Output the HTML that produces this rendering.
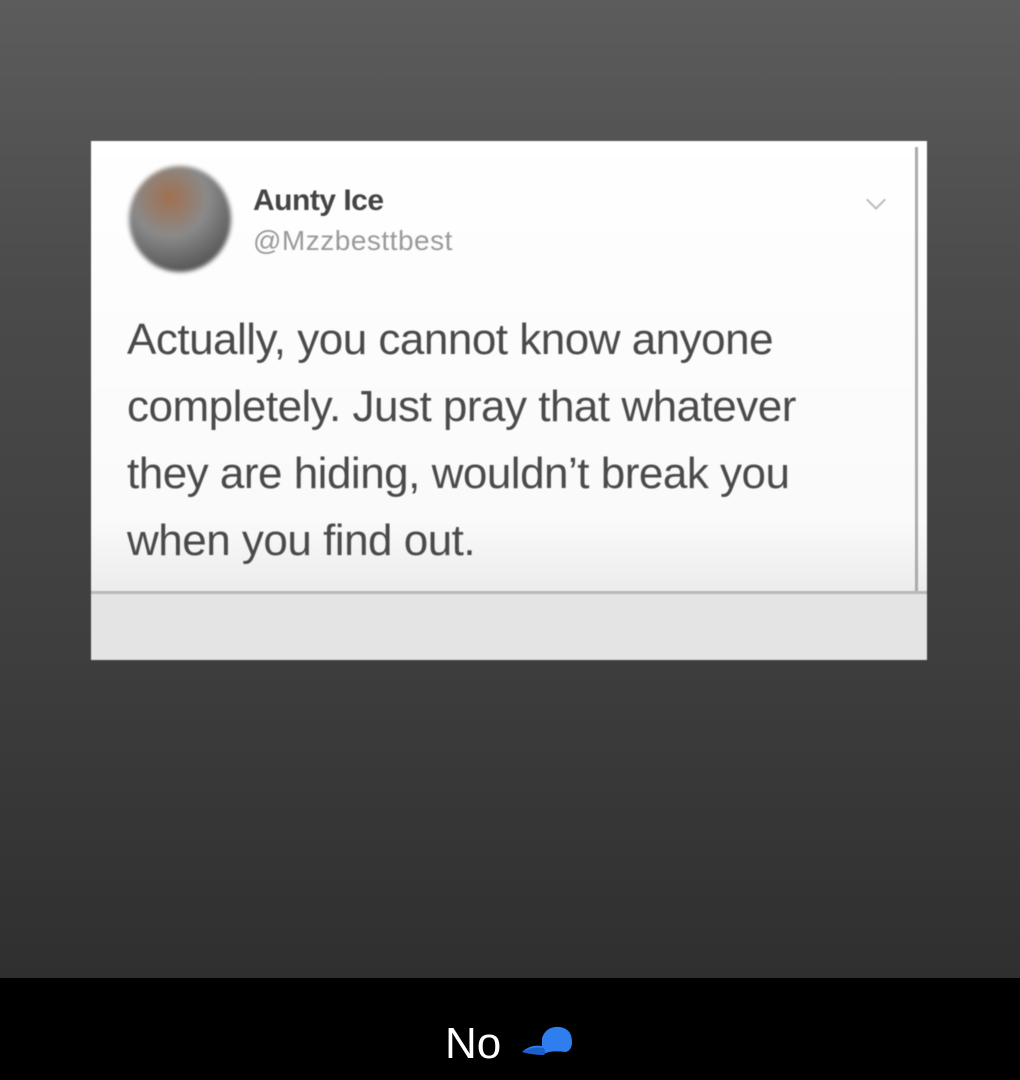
<!DOCTYPE html>
<html><head><style>
body{margin:0;width:1020px;height:1080px;overflow:hidden;background:linear-gradient(#5c5c5c 0,#4a4a4a 300px,#3e3e3e 650px,#2f2f2f 978px);font-family:"Liberation Sans",sans-serif;position:relative}
.card{position:absolute;left:91px;top:141px;width:836px;height:516px;background:linear-gradient(#fff 0,#fafafa 380px,#ececec 450px);filter:blur(0.6px)}
.foot{position:absolute;left:0;top:450px;width:836px;height:66px;background:#e4e4e4;border-top:3px solid #b8b8b8}
.vline{position:absolute;left:824px;top:6px;width:3px;height:444px;background:#aaa}
.av{position:absolute;left:38px;top:25px;width:102px;height:106px;border-radius:50%;background:radial-gradient(circle at 40% 30%,#a07050 0,#8a8a8a 40%,#5a5a5a 75%,#333 100%);filter:blur(2px)}
.name{position:absolute;left:162px;top:43px;font-size:30px;font-weight:bold;color:#444;letter-spacing:-0.5px}
.handle{position:absolute;left:162px;top:84px;font-size:28px;color:#9a9a9a;letter-spacing:0.5px}
.txt{position:absolute;left:36px;top:165px;font-size:44px;line-height:67px;color:#4a4a4a;letter-spacing:-0.5px;white-space:nowrap}
.chev{position:absolute;left:778px;top:52px;width:12px;height:12px;border-right:2px solid #bbb;border-bottom:2px solid #bbb;transform:rotate(45deg)}
.bar{position:absolute;left:0;top:978px;width:1020px;height:102px;background:#000}
.no{position:absolute;left:445px;top:1019px;font-size:44px;color:#fff}
</style></head><body>
<div class="card">
<div class="av"></div>
<div class="name">Aunty Ice</div>
<div class="handle">@Mzzbesttbest</div>
<div class="chev"></div>
<div class="txt">Actually, you cannot know anyone<br>completely. Just pray that whatever<br>they are hiding, wouldn’t break you<br>when you find out.</div>
<div class="vline"></div>
<div class="foot"></div>
</div>
<div class="bar"></div>
<div class="no">No</div>
<svg style="position:absolute;left:520px;top:1024px" width="54" height="36" viewBox="0 0 54 36">
<path d="M2 28 Q10 20 22 22 L22 14 Q26 2 40 3 Q52 5 52 18 Q52 26 46 28 Q30 26 24 30 Q12 30 2 28Z" fill="#2e7ef0"/>
<path d="M2 28 Q12 22 24 24 Q26 30 24 31 Q12 31 2 28Z" fill="#1c5fc8"/>
</svg>
</body></html>
